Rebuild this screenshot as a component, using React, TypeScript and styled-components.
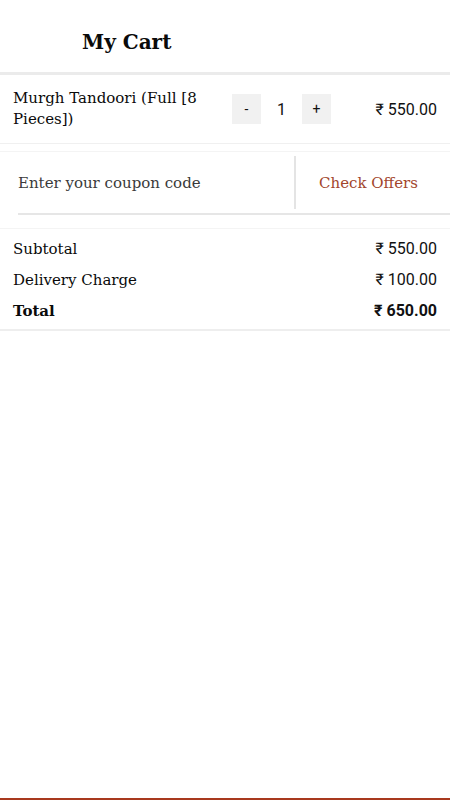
import React from "react";
import styled, { createGlobalStyle } from "styled-components";

const GlobalStyle = createGlobalStyle`
  html, body {
    margin: 0;
    padding: 0;
    background: #ffffff;
  }
  body {
    font-family: "DejaVu Serif", "Liberation Serif", serif;
    color: #111111;
  }
`;

const slab = `"DejaVu Serif", "Liberation Serif", serif`;
const sans = `Roboto, "Liberation Sans", sans-serif`;

const Page = styled.div`
  min-height: 800px;
  display: flex;
  flex-direction: column;
  box-sizing: border-box;
  border-bottom: 2px solid #a8391e;
`;

const Header = styled.header`
  height: 72px;
  display: flex;
  align-items: center;
  padding-left: 82px;
  border-bottom: 3px solid #ebebeb;
`;

const Title = styled.h1`
  margin: 0;
  font-family: ${slab};
  font-size: 20px;
  font-weight: 700;
  color: #0a0a0a;
  padding-top: 12px;
`;

const ItemRow = styled.div`
  display: flex;
  align-items: center;
  padding: 12px 13px 12px 13px;
  min-height: 44px;
  border-bottom: 1px solid #f0f0f0;
`;

const ItemName = styled.div`
  flex: 1;
  font-family: ${slab};
  font-size: 15px;
  line-height: 21px;
  color: #0a0a0a;
  padding-right: 20px;
`;

const Stepper = styled.div`
  display: flex;
  align-items: center;
  width: 99px;
  justify-content: space-between;
`;

const StepButton = styled.button`
  width: 29px;
  height: 30px;
  border: none;
  background: #f1f1f1;
  font-family: ${sans};
  font-size: 14px;
  color: #111;
  padding: 0;
  cursor: pointer;
`;

const Qty = styled.span`
  font-family: ${sans};
  font-size: 16px;
  color: #111;
`;

const Price = styled.div<{ $bold?: boolean }>`
  font-family: ${sans};
  font-size: 16px;
  font-weight: ${(p) => (p.$bold ? 700 : 400)};
  color: #111;
  text-align: right;
  white-space: nowrap;
`;

const ItemPrice = styled(Price)`
  width: 106px;
`;

const CouponRow = styled.div`
  margin-top: 7px;
  height: 63px;
  display: flex;
  align-items: stretch;
  border-top: 1px solid #f4f4f4;
  position: relative;
  &::after {
    content: "";
    position: absolute;
    left: 18px;
    right: 0;
    bottom: 0;
    height: 2px;
    background: #e6e6e6;
  }
`;

const CouponInput = styled.input`
  flex: 0 0 296px;
  box-sizing: border-box;
  border: none;
  border-right: 2px solid #e4e4e4;
  margin: 4px 0 6px;
  padding: 0 0 0 18px;
  font-family: ${slab};
  font-size: 15px;
  font-weight: 300;
  color: #333;
  outline: none;
  background: transparent;
  &::placeholder {
    color: #3a3a3a;
  }
`;

const OffersButton = styled.button`
  flex: 1;
  border: none;
  background: transparent;
  font-family: ${slab};
  font-size: 15px;
  color: #a2452c;
  text-align: left;
  padding: 0 0 2px 23px;
  cursor: pointer;
`;

const Summary = styled.div`
  margin-top: 13px;
  border-top: 1px solid #f4f4f4;
  border-bottom: 2px solid #eeeeee;
  padding: 4px 13px 3px;
  display: flex;
  flex-direction: column;
`;

const SummaryRow = styled.div`
  display: flex;
  justify-content: space-between;
  align-items: center;
  height: 31px;
`;

const Label = styled.span<{ $bold?: boolean }>`
  font-family: ${slab};
  font-size: 15px;
  font-weight: ${(p) => (p.$bold ? 700 : 400)};
  color: #0a0a0a;
`;

const summary = [
  { label: "Subtotal", value: "₹ 550.00" },
  { label: "Delivery Charge", value: "₹ 100.00" },
  { label: "Total", value: "₹ 650.00", bold: true },
];

export default function App() {
  return (
    <>
      <GlobalStyle />
      <Page>
        <Header>
          <Title>My Cart</Title>
        </Header>
        <ItemRow>
          <ItemName>Murgh Tandoori (Full [8 Pieces])</ItemName>
          <Stepper>
            <StepButton>-</StepButton>
            <Qty>1</Qty>
            <StepButton>+</StepButton>
          </Stepper>
          <ItemPrice>₹ 550.00</ItemPrice>
        </ItemRow>
        <CouponRow>
          <CouponInput placeholder="Enter your coupon code" />
          <OffersButton>Check Offers</OffersButton>
        </CouponRow>
        <Summary>
          {summary.map((s) => (
            <SummaryRow key={s.label}>
              <Label $bold={s.bold}>{s.label}</Label>
              <Price $bold={s.bold}>{s.value}</Price>
            </SummaryRow>
          ))}
        </Summary>
      </Page>
    </>
  );
}
